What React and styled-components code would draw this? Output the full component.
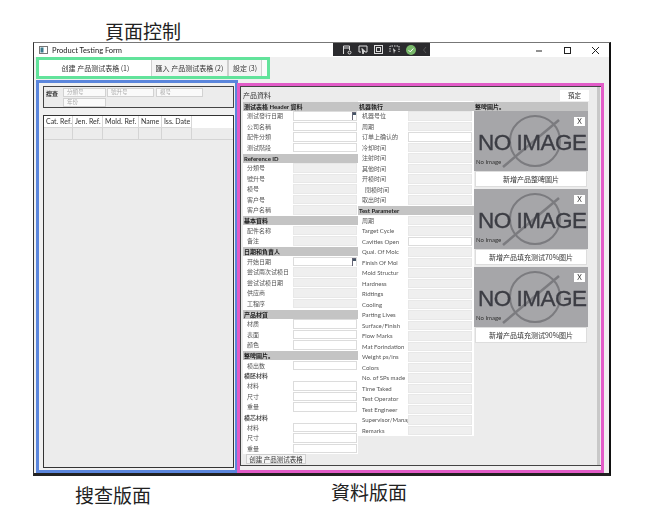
import React from 'react'
import styled, { createGlobalStyle } from 'styled-components'

const cjk = '"Noto Sans CJK SC", "Noto Sans CJK TC", sans-serif'
const ui = 'Lato, "Noto Sans CJK SC", sans-serif'

const headerRows = [['测试發行日期', true, true], ['公司名稱', true], ['配件分類', true], ['测试階段', true]]
const referenceRows = [['分類号'], ['號升号'], ['模号'], ['客户号'], ['客户名稱']]
const basicRows = [['配件名称'], ['备注']]
const dateRows = [['开始日期', true, true], ['尝试兩次试模日'], ['尝试试模日期'], ['供应商'], ['工程序']]
const materialRows = [['材质', true], ['表面', true], ['颜色', true]]
const moldRows = [['材料', true], ['尺寸', true], ['重量', true]]

const machineRows = [['机器号位'], ['周期'], ['订单上确认的', true], ['冷却时间'], ['注射时间'], ['其他时间'], ['开模时间'], ['  閉模时间'], ['取出时间']]
const paramRows = [
  ['周期'], ['Target Cycle'], ['Cavities Open', true], ['Qual. Of Molc'], ['Finish Of Mol'],
  ['Mold Structur'], ['Hardness'], ['Ridtings'], ['Cooling'], ['Parting Lives'],
  ['Surface/Finish'], ['Flow Marks'], ['Mat Forindation'], ['Weight ps/ins'], ['Colors'],
  ['No. of SPs made'], ['Time Taked'], ['Test Operator'], ['Test Engineer'], ['Supervisor/Manag'], ['Remarks'],
]

const tableColumns = [
  ['Cat. Ref.', 29],
  ['Jen. Ref.', 30],
  ['Mold. Ref.', 36],
  ['Name', 23],
  ['Iss. Date', 30],
]

const imageSlots = ['新增产品整啤圖片', '新增产品填充测试70%图片', '新增产品填充测试90%图片']

const Fields = ({ rows }) =>
  rows.map(([label, editable, hasDate], i) => (
    <Row key={i}>
      <RowLabel>{label}</RowLabel>
      <Field $editable={editable}>{hasDate && <DateMark />}</Field>
    </Row>
  ))

const NoImage = () => (
  <svg width="114" height="60" viewBox="0 0 114 60">
    <circle cx="61" cy="30" r="25" fill="none" stroke="#7b7b7f" strokeWidth="2" />
    <line x1="29" y1="56" x2="85" y2="9" stroke="#7b7b7f" strokeWidth="2.5" />
    <text
      x="4"
      y="39"
      fontFamily="Liberation Sans, sans-serif"
      fontSize="22.5"
      fill="#3c3d44"
      stroke="#3c3d44"
      strokeWidth="0.35"
      textLength="109"
    >
      NO IMAGE
    </text>
    <text x="2" y="53" fontFamily="Lato, sans-serif" fontSize="6" fill="#333">
      No Image
    </text>
  </svg>
)

const App = () => (
  <Page>
    <GlobalStyle />
    <TopCaption>頁面控制</TopCaption>
    <Window>
      <TitleBar>
        <svg width="9" height="8" viewBox="0 0 9 8">
          <rect x="0.5" y="0.5" width="8" height="7" fill="#fff" stroke="#777" />
          <rect x="1.5" y="1.5" width="3" height="5" fill="#3b7a8c" />
        </svg>
        <TitleText>Product Testing Form</TitleText>
        <WindowControls>
          <ControlBox>
            <svg width="9" height="9" viewBox="0 0 9 9"><line x1="1" y1="5" x2="7" y2="5" stroke="#222" /></svg>
          </ControlBox>
          <ControlBox>
            <svg width="9" height="9" viewBox="0 0 9 9"><rect x="1.5" y="1.5" width="6" height="6" fill="none" stroke="#222" /></svg>
          </ControlBox>
          <ControlBox>
            <svg width="9" height="9" viewBox="0 0 9 9"><path d="M1 1l7 7M8 1L1 8" stroke="#222" /></svg>
          </ControlBox>
        </WindowControls>
        <DebugBar>
          <svg width="10" height="10" viewBox="0 0 10 10" fill="none" stroke="#ddd">
            <path d="M1.5 9V1h6v4M1.5 3h6" />
            <circle cx="7.5" cy="7.5" r="1.5" />
          </svg>
          <svg width="10" height="10" viewBox="0 0 10 10" fill="none" stroke="#ddd">
            <path d="M3 7H1V1h8v6H7" />
            <path d="M4 3.5l3 3-1.4.2L5 9z" fill="#ddd" />
          </svg>
          <svg width="9" height="9" viewBox="0 0 9 9" fill="none" stroke="#ddd">
            <rect x="0.5" y="0.5" width="8" height="8" />
            <rect x="2.5" y="2.5" width="4" height="4" />
          </svg>
          <svg width="11" height="10" viewBox="0 0 11 10" fill="none" stroke="#ddd" strokeDasharray="1.5 1">
            <path d="M1 7V1h9v6" />
            <path d="M4 3l3 3-1.4.2L5 9z" fill="#ddd" stroke="none" />
          </svg>
          <svg width="10" height="10" viewBox="0 0 10 10">
            <circle cx="5" cy="5" r="5" fill="#79b96b" />
            <path d="M2.6 5.2l1.7 1.7 3-3.4" fill="none" stroke="#fff" />
          </svg>
          <svg width="6" height="8" viewBox="0 0 6 8"><path d="M4 1L1.5 4 4 7" fill="none" stroke="#555" /></svg>
        </DebugBar>
      </TitleBar>

      <TabFrame>
        <Tab $width={111} $active>创建 产品测试表格 (1)</Tab>
        <Tab $width={77}>匯入 产品测试表格 (2)</Tab>
        <Tab $width={34}>設定 (3)</Tab>
      </TabFrame>

      <Panels>
        <SearchPanel>
          <SearchGroup>
            <SearchTitle>搜查</SearchTitle>
            <SearchInputs>
              <SearchInput $width={43}>分類号</SearchInput>
              <SearchInput $width={47}>號升号</SearchInput>
              <SearchInput $width={47} $gap>模号</SearchInput>
              <SearchInput $width={43}>年份</SearchInput>
            </SearchInputs>
          </SearchGroup>
          <TableGroup>
            <TableHead>
              {tableColumns.map(([name, width]) => (
                <HeadCell key={name} $width={width}>{name}</HeadCell>
              ))}
            </TableHead>
            <TableRow>
              {tableColumns.map(([name, width]) => (
                <BodyCell key={name} $width={width} />
              ))}
            </TableRow>
          </TableGroup>
        </SearchPanel>

        <DataPanel>
          <DataGroup>
            <DataScroll>
              <DataTop>
                <DataTitle>产品資料</DataTitle>
                <ConfirmButton>預定</ConfirmButton>
              </DataTop>
              <Columns>
                <div>
                  <FormColumn>
                    <SectionHead>测试表格 Header 資料</SectionHead>
                    <Fields rows={headerRows} />
                    <SectionHead>Reference ID</SectionHead>
                    <Fields rows={referenceRows} />
                    <SectionHead>基本資料</SectionHead>
                    <Fields rows={basicRows} />
                    <SectionHead>日期和負責人</SectionHead>
                    <Fields rows={dateRows} />
                    <SectionHead>产品材質</SectionHead>
                    <Fields rows={materialRows} />
                    <SectionHead>整啤圖片。</SectionHead>
                    <Fields rows={[['模出数', true]]} />
                    <SubHead>模胚材料</SubHead>
                    <Fields rows={moldRows} />
                    <SubHead>模芯材料</SubHead>
                    <Fields rows={moldRows} />
                  </FormColumn>
                  <CreateButton>创建 产品测试表格</CreateButton>
                </div>
                <FormColumn>
                  <SectionHead>机器執行</SectionHead>
                  <Fields rows={machineRows} />
                  <SectionHead>Test Parameter</SectionHead>
                  <Fields rows={paramRows} />
                </FormColumn>
                <ImageColumn>
                  <SectionHead>整啤圖片。</SectionHead>
                  {imageSlots.map((label) => (
                    <ImageSlot key={label}>
                      <ImageTile>
                        <NoImage />
                        <RemoveButton>X</RemoveButton>
                      </ImageTile>
                      <AddImageButton>{label}</AddImageButton>
                    </ImageSlot>
                  ))}
                </ImageColumn>
              </Columns>
            </DataScroll>
            <Scrollbar />
          </DataGroup>
        </DataPanel>
      </Panels>
    </Window>
    <BottomCaptions>
      <SearchCaption>搜查版面</SearchCaption>
      <DataCaption>資料版面</DataCaption>
    </BottomCaptions>
  </Page>
)

const GlobalStyle = createGlobalStyle`
  html, body {
    margin: 0;
    padding: 0;
    background: #fff;
  }
`

const Page = styled.div`
  width: 648px;
  height: 518px;
  overflow: hidden;
  font-family: ${cjk};
`

const Caption = styled.div`
  font-size: 19px;
  line-height: 22px;
  color: #222;
`

const TopCaption = styled(Caption)`
  padding: 20px 0 0 105px;
  height: 22px;
`

const BottomCaptions = styled.div`
  display: flex;
  align-items: flex-start;
`

const SearchCaption = styled(Caption)`
  margin: 8px 0 0 75px;
`

const DataCaption = styled(Caption)`
  margin: 5px 0 0 180px;
`

const Window = styled.div`
  width: 578px;
  height: 434px;
  margin-left: 33px;
  box-sizing: border-box;
  background: #f0f0f0;
  border-left: 1px solid #333;
  border-right: 2px solid #111;
  border-top: 1px solid #777;
  border-bottom: 3px solid #222;
  display: flex;
  flex-direction: column;
  filter: blur(0.3px);
`

const TitleBar = styled.div`
  position: relative;
  height: 14px;
  flex: none;
  display: flex;
  align-items: center;
  padding-left: 5px;
  background: #fff;
`

const TitleText = styled.span`
  margin-left: 4px;
  font: 7.5px ${ui};
  color: #222;
`

const WindowControls = styled.div`
  margin-left: auto;
  display: flex;
`

const ControlBox = styled.div`
  width: 28px;
  height: 14px;
  display: flex;
  align-items: center;
  justify-content: center;
`

const DebugBar = styled.div`
  position: absolute;
  left: 299px;
  top: 0;
  width: 97px;
  height: 13px;
  box-sizing: border-box;
  padding-left: 9px;
  background: #2b2b2e;
  display: flex;
  align-items: center;
  gap: 6px;
`

const TabFrame = styled.div`
  flex: none;
  align-self: flex-start;
  margin-left: 2px;
  width: 234px;
  height: 22px;
  box-sizing: border-box;
  border: 3px solid #62e39b;
  padding-left: 1px;
  display: flex;
  background: #fbfbfb;
`

const Tab = styled.div`
  width: ${(p) => p.$width}px;
  box-sizing: border-box;
  display: flex;
  align-items: center;
  justify-content: center;
  font-size: 7px;
  white-space: nowrap;
  color: #333;
  background: ${(p) => (p.$active ? '#fff' : '#f4f4f4')};
  border-left: ${(p) => (p.$active ? 'none' : '1px solid #cfcfcf')};
  border-right: ${(p) => (p.$active ? 'none' : '1px solid #cfcfcf')};
`

const Panels = styled.div`
  flex: 1;
  min-height: 0;
  margin-left: 2px;
  display: flex;
  align-items: flex-end;
`

const SearchPanel = styled.div`
  width: 202px;
  height: 393px;
  flex: none;
  box-sizing: border-box;
  border: 3px solid #5b86dc;
  padding: 3px 1px 2px 4px;
  display: flex;
  flex-direction: column;
  gap: 7px;
  background: #f0f0f0;
`

const SearchGroup = styled.div`
  height: 22px;
  flex: none;
  box-sizing: border-box;
  border: 1px solid #444;
  background: #ececec;
  display: flex;
`

const SearchTitle = styled.span`
  width: 19px;
  padding: 2px 0 0 2px;
  box-sizing: border-box;
  font-size: 6px;
  font-weight: 700;
  color: #333;
`

const SearchInputs = styled.div`
  display: flex;
  flex-wrap: wrap;
  align-content: flex-start;
  gap: 1px;
  padding-top: 1px;
  width: 145px;
`

const SearchInput = styled.div`
  width: ${(p) => p.$width}px;
  height: 9px;
  margin-left: ${(p) => (p.$gap ? '1px' : 0)};
  box-sizing: border-box;
  padding-left: 3px;
  background: #fafafa;
  border: 1px solid #d2d2d2;
  font-size: 5.5px;
  line-height: 7px;
  color: #aaa;
`

const TableGroup = styled.div`
  flex: 1;
  box-sizing: border-box;
  border: 1px solid #333;
  background: #ececec;
`

const TableHead = styled.div`
  display: flex;
  height: 12px;
  background: #fff;
`

const HeadCell = styled.div`
  width: ${(p) => p.$width}px;
  box-sizing: border-box;
  padding-left: 2px;
  border-right: 1px solid #d8d8d8;
  border-bottom: 1px solid #d8d8d8;
  font: 7px/11px ${ui};
  white-space: nowrap;
  color: #333;
`

const TableRow = styled.div`
  display: flex;
  height: 11px;
  border-bottom: 1px solid #d4d4d4;
`

const BodyCell = styled.div`
  width: ${(p) => p.$width}px;
  box-sizing: border-box;
  border-right: 1px solid #d4d4d4;
`

const DataPanel = styled.div`
  width: 367px;
  height: 390px;
  margin-left: -1px;
  flex: none;
  box-sizing: border-box;
  border: 3px solid #e25cc8;
  padding-bottom: 4px;
  background: #f0f0f0;
`

const DataGroup = styled.div`
  height: 100%;
  box-sizing: border-box;
  border: 1px solid #444;
  border-width: 1px 0 1px 1px;
  background: #ececec;
  display: flex;
`

const DataScroll = styled.div`
  flex: 1;
  min-width: 0;
  padding-left: 2px;
`

const Scrollbar = styled.div`
  width: 3px;
  margin-right: 1px;
  flex: none;
  background: #c8c8c8;
`

const DataTop = styled.div`
  height: 14px;
  padding-right: 8px;
  display: flex;
  align-items: flex-end;
  justify-content: space-between;
`

const DataTitle = styled.span`
  font-size: 7px;
  line-height: 12px;
  color: #333;
`

const ConfirmButton = styled.div`
  width: 29px;
  height: 11px;
  background: #fff;
  text-align: center;
  font-size: 6.5px;
  line-height: 11px;
  color: #333;
`

const Columns = styled.div`
  display: grid;
  grid-template-columns: 115px 116px 114px;
  align-items: start;
`

const FormColumn = styled.div`
  background: #fff;
`

const ImageColumn = styled.div`
  display: flex;
  flex-direction: column;
`

const SectionHead = styled.div`
  height: 9px;
  margin-top: 0.5px;
  margin-bottom: 0.5px;
  padding-left: 1px;
  background: #c4c4c4;
  font: 700 6px/9px ${ui};
  white-space: nowrap;
  color: #222;
`

const SubHead = styled.div`
  height: 10px;
  padding-left: 1px;
  background: #fff;
  font-size: 6px;
  font-weight: 500;
  line-height: 10px;
  color: #333;
`

const Row = styled.div`
  display: flex;
  height: 10.5px;
  background: #fff;
`

const RowLabel = styled.span`
  width: 50px;
  flex: none;
  box-sizing: border-box;
  padding-left: 4px;
  font: 6px/10px ${ui};
  white-space: pre;
  color: #555;
`

const Field = styled.div`
  position: relative;
  width: 64px;
  height: 9.5px;
  box-sizing: border-box;
  background: ${(p) => (p.$editable ? '#fff' : '#efefef')};
  border: 1px solid ${(p) => (p.$editable ? '#dcdcdc' : '#e8e8e8')};
`

const DateMark = styled.span`
  position: absolute;
  right: 0;
  top: 0;
  width: 3px;
  height: 7px;
  background: #fff;
  border: 1px solid #667;
  border-bottom-width: 0;
  border-right-width: 0;
  box-shadow: inset 0 2px 0 #456;
`

const CreateButton = styled.div`
  width: 60px;
  height: 10px;
  margin-left: 3px;
  box-sizing: border-box;
  border: 1px solid #cfcfcf;
  background: #f4f4f4;
  text-align: center;
  font-size: 6.5px;
  line-height: 8px;
  white-space: nowrap;
  color: #333;
`

const ImageSlot = styled.div`
  display: flex;
  flex-direction: column;
  margin-bottom: 2px;
`

const ImageTile = styled.div`
  position: relative;
  height: 60px;
  background: #a6a6a9;

  svg {
    display: block;
  }
`

const RemoveButton = styled.div`
  position: absolute;
  right: 3px;
  top: 6px;
  width: 11px;
  height: 9px;
  background: #fff;
  text-align: center;
  font: 7px/9px ${ui};
  color: #333;
`

const AddImageButton = styled.div`
  height: 16px;
  margin: 0 1px;
  box-sizing: border-box;
  background: #fff;
  border: 1px solid #ddd;
  text-align: center;
  font-size: 7px;
  line-height: 14px;
  color: #333;
`

export default App
